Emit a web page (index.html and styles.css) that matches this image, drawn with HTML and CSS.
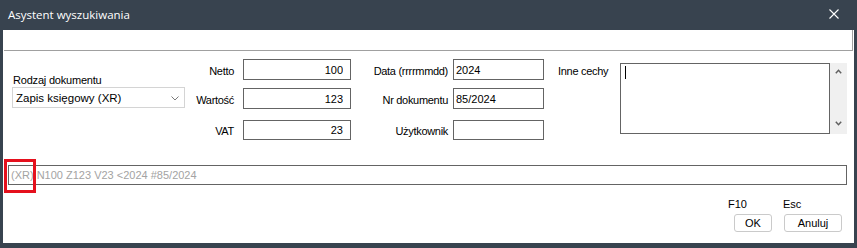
FILE: index.html
```html
<!DOCTYPE html>
<html lang="pl">
<head>
    <meta charset="UTF-8">
    <meta name="viewport" content="width=device-width, initial-scale=1.0">
    <title>Asystent wyszukiwania</title>
    <link rel="stylesheet" href="styles.css">
</head>
<body>
    <div class="window">
        <div class="titlebar">
            <span class="title">Asystent wyszukiwania</span>
            <svg class="close" width="10" height="10" viewBox="0 0 10 10">
                <path d="M0.5 0.5 L9.5 9.5 M9.5 0.5 L0.5 9.5" stroke="#ffffff" stroke-width="1.1" fill="none"/>
            </svg>
        </div>

        <div class="client">
            <div class="strip"></div>

            <div class="form">
                <div class="doc-col">
                    <div class="doc-label">Rodzaj dokumentu</div>
                    <div class="select">
                        <span>Zapis księgowy (XR)</span>
                        <svg width="8" height="5" viewBox="0 0 8 5">
                            <path d="M0.5 0.5 L4 4 L7.5 0.5" stroke="#7a7a7a" stroke-width="1" fill="none"/>
                        </svg>
                    </div>
                </div>

                <div class="fields amounts">
                    <div class="field-row">
                        <label>Netto</label>
                        <input type="text" class="num" value="100" readonly>
                    </div>
                    <div class="field-row second">
                        <label>Wartość</label>
                        <input type="text" class="num" value="123" readonly>
                    </div>
                    <div class="field-row third">
                        <label>VAT</label>
                        <input type="text" class="num" value="23" readonly>
                    </div>
                </div>

                <div class="fields meta">
                    <div class="field-row">
                        <label>Data (rrrrmmdd)</label>
                        <input type="text" value="2024" readonly>
                    </div>
                    <div class="field-row second">
                        <label>Nr dokumentu</label>
                        <input type="text" value="85/2024" readonly>
                    </div>
                    <div class="field-row third">
                        <label>Użytkownik</label>
                        <input type="text" value="" readonly>
                    </div>
                </div>

                <div class="other">
                    <label>Inne cechy</label>
                    <div class="memo">
                        <div class="memo-text"><span class="caret"></span></div>
                        <div class="scroll">
                            <svg width="7" height="5" viewBox="0 0 7 5">
                                <path d="M0.8 4.2 L3.5 1.3 L6.2 4.2" stroke="#606060" stroke-width="1.5" fill="none"/>
                            </svg>
                            <svg width="7" height="5" viewBox="0 0 7 5">
                                <path d="M0.8 0.8 L3.5 3.7 L6.2 0.8" stroke="#606060" stroke-width="1.5" fill="none"/>
                            </svg>
                        </div>
                    </div>
                </div>
            </div>

            <div class="summary">(XR) N100 Z123 V23 &lt;2024 #85/2024</div>
            <div class="highlight"></div>

            <div class="buttons">
                <div class="key-group ok-group">
                    <span class="key">F10</span>
                    <button class="btn ok">OK</button>
                </div>
                <div class="key-group esc-group">
                    <span class="key">Esc</span>
                    <button class="btn cancel">Anuluj</button>
                </div>
            </div>
        </div>
    </div>
</body>
</html>
```

FILE: styles.css
```css
html, body {
    margin: 0;
    padding: 0;
}

body {
    width: 857px;
    height: 248px;
    background: #38434f;
    font-family: "Liberation Sans", Arial, sans-serif;
    font-size: 11px;
    color: #000;
    overflow: hidden;
}

.window {
    height: 248px;
    display: flex;
    flex-direction: column;
}

.titlebar {
    height: 30px;
    flex: none;
    display: flex;
    align-items: center;
    justify-content: space-between;
    padding: 0 18px 0 8px;
    color: #fff;
}

.title {
    font-family: "Open Sans", "Noto Sans", sans-serif;
    font-size: 11.5px;
    margin-top: -1px;
}

.close {
    display: block;
    margin-top: -3px;
}

.client {
    flex: 1;
    margin: 0 3px 5px 3px;
    background: #fff;
    position: relative;
}

.strip {
    height: 20px;
    margin: 0 1px;
    border-bottom: 1px solid #a0a0a0;
    border-right: 1px solid #a0a0a0;
}

.form {
    display: flex;
    align-items: flex-start;
    padding: 8px 0 0 9px;
}

.doc-col {
    width: 173px;
    margin-top: 15px;
}

.doc-label {
    line-height: 13px;
    padding-left: 1px;
    letter-spacing: -0.2px;
}

.select {
    box-sizing: border-box;
    height: 21px;
    border: 1px solid #d4d4d4;
    display: flex;
    align-items: center;
    justify-content: space-between;
    padding: 0 5px 0 3px;
    font-size: 11.5px;
}

.select svg {
    display: block;
    margin-top: 1px;
}

.fields .field-row {
    display: flex;
    align-items: center;
    height: 21px;
}

.fields .field-row.second {
    margin-top: 8px;
}

.fields .field-row.third {
    margin-top: 11px;
    height: 20px;
}

.fields label {
    text-align: right;
    padding-top: 2px;
    white-space: nowrap;
}

.amounts label {
    width: 49px;
    padding-right: 2px;
    margin-right: 7px;
    letter-spacing: -0.3px;
}

.meta {
    margin-left: 17px;
}

.meta label {
    width: 80px;
    margin-right: 5px;
    letter-spacing: -0.3px;
}

input[type="text"] {
    box-sizing: border-box;
    height: 100%;
    margin: 0;
    border: 1px solid #646464;
    border-radius: 0;
    padding: 0 2px;
    font-family: "Liberation Sans", Arial, sans-serif;
    font-size: 11px;
    color: #000;
    background: #fff;
    outline: none;
}

.amounts input {
    width: 108px;
}

.meta input {
    width: 91px;
}

input.num {
    text-align: right;
    padding-right: 7px;
}

.other {
    display: flex;
    align-items: flex-start;
    margin-left: 14px;
}

.other label {
    width: 62px;
    margin-top: 6px;
    line-height: 13px;
    letter-spacing: -0.3px;
}

.memo {
    display: flex;
    margin-top: 4px;
    height: 71px;
}

.memo-text {
    box-sizing: border-box;
    width: 210px;
    border: 1px solid #646464;
    padding: 2px 0 0 4px;
}

.caret {
    display: block;
    width: 1px;
    height: 13px;
    background: #000;
}

.scroll {
    width: 17px;
    background: #f0f0f0;
    display: flex;
    flex-direction: column;
    align-items: center;
    justify-content: space-between;
    padding: 6px 0 8px 0;
    box-sizing: border-box;
}

.scroll svg {
    display: block;
}

.summary {
    box-sizing: border-box;
    height: 20px;
    margin: 25px 7px 0 5px;
    border: 1px solid #646464;
    padding: 0 2px;
    line-height: 18px;
    color: #a3a3a3;
    white-space: nowrap;
}

.highlight {
    position: absolute;
    left: 1px;
    top: 129px;
    width: 32px;
    height: 34px;
    box-sizing: border-box;
    border: 3px solid #e5101d;
}

.buttons {
    display: flex;
    justify-content: flex-end;
    gap: 11px;
    margin-top: 13px;
    padding-right: 12px;
}

.key-group {
    display: flex;
    flex-direction: column;
    align-items: flex-start;
}

.key {
    line-height: 13px;
    margin-bottom: 3px;
}

.btn {
    box-sizing: border-box;
    height: 18px;
    padding: 0;
    border: 1px solid #cacaca;
    border-radius: 3px;
    background: #fff;
    font-family: "Liberation Sans", Arial, sans-serif;
    font-size: 11px;
    color: #000;
}

.ok {
    width: 38px;
    margin-left: 6px;
}

.cancel {
    width: 58px;
    margin-left: 1px;
}
```
